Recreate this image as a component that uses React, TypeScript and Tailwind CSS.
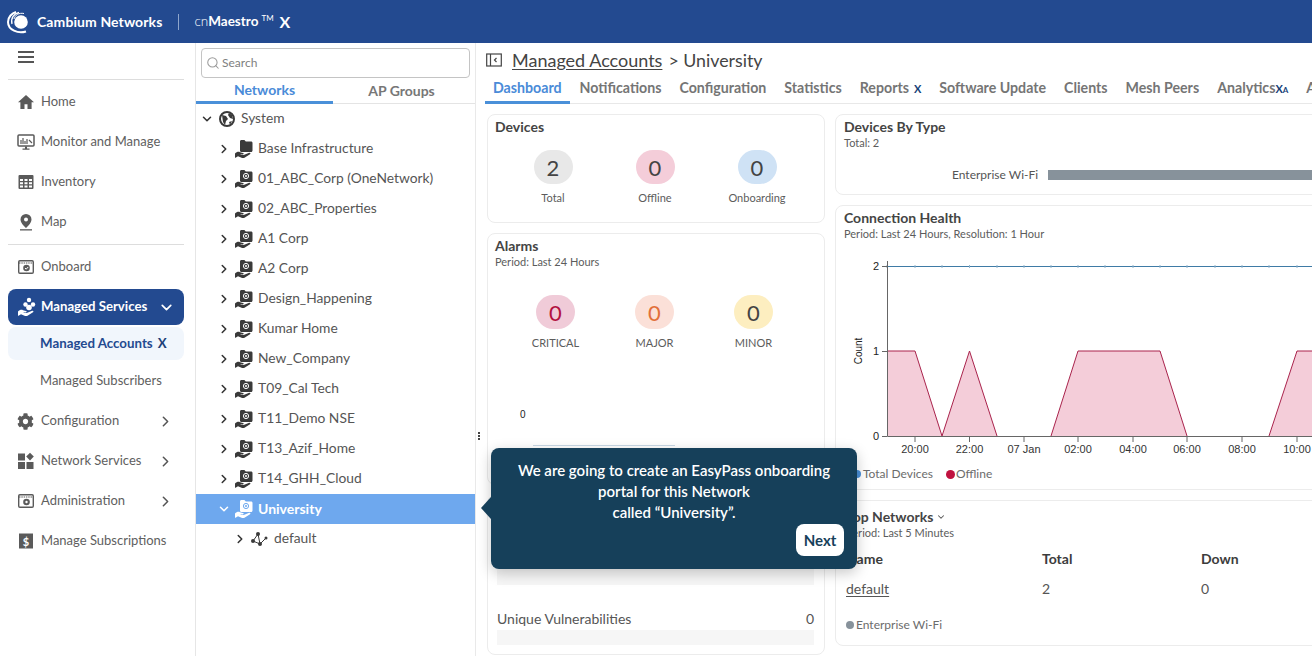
// Dashboard screen: nav rail, network tree, dashboard cards and onboarding tip
import type { ReactNode } from 'react'
import { ChevronDown, ChevronRight, Search } from 'lucide-react'
import { FaCog } from 'react-icons/fa'

const FONT = 'font-["Lato","Noto_Sans",sans-serif]'

function HandFolder({ at = true, light = false }: { at?: boolean; light?: boolean }) {
  const c = light ? '#ffffff' : '#3a3a3a'
  const inner = light ? '#6ea8ee' : '#ffffff'
  return (
    <svg width="20" height="20" viewBox="0 0 20 20" className="shrink-0">
      <path d="M6 2.5c0-.8.6-1.5 1.4-1.5h3l1.4 1.6h5.3c.8 0 1.4.6 1.4 1.4v7.5c0 .8-.6 1.5-1.4 1.5H7.4c-.8 0-1.4-.7-1.4-1.5z" fill={c} />
      {at && <circle cx="12" cy="7" r="2.6" fill="none" stroke={inner} strokeWidth="1" />}
      {at && <circle cx="12" cy="7" r="1" fill={inner} />}
      <path d="M1 14.5c1.5-1.6 3.5-2 5-1.3l3 .8c1 .3.9 1.5-.2 1.5H6.5l.2.5h3l5.5-2.2c1.2-.3 1.7.9.8 1.5l-5.5 3.4c-.8.4-1.5.5-2.4.2L4 17.3l-2.5 1.5H1z" fill={c} />
    </svg>
  )
}

function HomeIcon() {
  return (
    <svg width="18" height="18" viewBox="0 0 18 18" fill="#5a5a5a">
      <path d="M9 2L1 9.2h2.4V16h4.1v-4.8h3V16h4.1V9.2H17z" />
    </svg>
  )
}

function MonitorIcon() {
  return (
    <svg width="18" height="18" viewBox="0 0 18 18">
      <rect x="1" y="2" width="16" height="11" rx="1" fill="none" stroke="#5a5a5a" strokeWidth="1.5" />
      <path d="M4 11V7M6 11V5M8 11V8M10 11V6M12 7l3 3" stroke="#5a5a5a" strokeWidth="1.2" fill="none" />
      <path d="M8 13.5h2v2h2.5v1.2h-7v-1.2H8z" fill="#5a5a5a" />
    </svg>
  )
}

function TableIcon() {
  return (
    <svg width="18" height="18" viewBox="0 0 18 18">
      <rect x="1.5" y="2" width="15" height="14" rx="1" fill="#5a5a5a" />
      <path d="M3 6h3v2H3zM7.5 6h3v2h-3zM12 6h3v2h-3zM3 9.2h3v2H3zM7.5 9.2h3v2h-3zM12 9.2h3v2h-3zM3 12.4h3v2H3zM7.5 12.4h3v2h-3zM12 12.4h3v2h-3z" fill="#fff" />
    </svg>
  )
}

function PinIcon() {
  return (
    <svg width="18" height="18" viewBox="0 0 18 18">
      <path d="M9 1a5.5 5.5 0 0 0-5.5 5.5C3.5 10.5 9 15 9 15s5.500-4.500 5.500-8.500A5.500 5.500 0 0 0 9 1zm0 7.500a2 2 0 1 1 0-4 2 2 0 0 1 0 4z" fill="#5a5a5a" />
      <rect x="3" y="16.2" width="12" height="1.3" fill="#5a5a5a" />
    </svg>
  )
}

function WindowIcon({ gear = false }: { gear?: boolean }) {
  return (
    <svg width="18" height="18" viewBox="0 0 18 18">
      <rect x="1.7" y="2.7" width="14.6" height="12.6" rx="1.2" fill="none" stroke="#5a5a5a" strokeWidth="1.4" />
      <path d="M2 5h14" stroke="#5a5a5a" strokeWidth="1.2" strokeDasharray="1.5 .8" />
      <circle cx="9.5" cy="10" r="3.3" fill="#5a5a5a" />
      {gear ? <circle cx="9.5" cy="10" r="1.2" fill="#fff" /> : <path d="M8 10l1.2 1.2L11.2 9" stroke="#fff" strokeWidth="1" fill="none" />}
    </svg>
  )
}

function PeopleHand() {
  return (
    <svg width="20" height="20" viewBox="0 0 20 20">
      <circle cx="12" cy="3" r="2.2" fill="#fff" />
      <circle cx="8.5" cy="7.5" r="2.2" fill="#fff" />
      <circle cx="16" cy="7.5" r="2.2" fill="#fff" />
      <circle cx="12" cy="10.5" r="2.8" fill="#fff" />
      <path d="M1 14.5c1.5-1.6 3.5-2 5-1.3l3 .8c1 .3.9 1.5-.2 1.5H6.5l.2.5h3l5.5-2.2c1.2-.3 1.7.9.8 1.5l-5.5 3.4c-.8.4-1.5.5-2.4.2L4 17.3l-2.5 1.5H1z" fill="#fff" />
    </svg>
  )
}

function TilesIcon() {
  return (
    <svg width="18" height="18" viewBox="0 0 18 18" fill="#5a5a5a">
      <rect x="1" y="1.5" width="7" height="7" />
      <rect x="1" y="10" width="7" height="7" />
      <rect x="9.5" y="10" width="7" height="7" />
      <path d="M13 .8l3.8 3.8L13 8.4 9.2 4.6z" />
    </svg>
  )
}

function SubsIcon() {
  return (
    <svg width="18" height="18" viewBox="0 0 18 18">
      <path d="M2 1.5h14v15H2z" fill="#5a5a5a" />
      <text x="9" y="13.5" textAnchor="middle" fontSize="11" fontWeight="700" fill="#fff" fontFamily="Lato, sans-serif">$</text>
    </svg>
  )
}

function Logo() {
  return (
    <svg width="24" height="24" viewBox="0 0 24 24" className="shrink-0">
      <circle cx="15" cy="12" r="6.8" fill="#fff" />
      <path d="M20 21.5C12 24 2 20 2 12 2 7 6 3 10 2" stroke="#fff" strokeWidth="2" fill="none" />
      <path d="M6 14C4.5 8 8 3.5 13 2.5" stroke="#fff" strokeWidth="1.3" fill="none" />
      <path d="M8 9c1-4 5-6.5 10-5.5" stroke="#fff" strokeWidth="1" fill="none" />
    </svg>
  )
}

function NavItem({ icon, label, arrow, className = '' }: { icon: ReactNode; label: string; arrow?: boolean; className?: string }) {
  return (
    <div className={'flex h-10 items-center pl-[17px] pr-[21px] ' + className}>
      <span className="flex w-6 items-center">{icon}</span>
      <span className="text-[13px] text-[#606060]">{label}</span>
      {arrow && <ChevronRight className="ml-auto h-[17px] w-[17px] text-[#555555]" strokeWidth={2.2} />}
    </div>
  )
}

const accounts = [
  '01_ABC_Corp (OneNetwork)', '02_ABC_Properties', 'A1 Corp', 'A2 Corp', 'Design_Happening', 'Kumar Home',
  'New_Company', 'T09_Cal Tech', 'T11_Demo NSE', 'T13_Azif_Home', 'T14_GHH_Cloud',
]

function TreeRow({ label, at = true }: { label: string; at?: boolean }) {
  return (
    <div className="flex h-[30px] items-center pl-[21px]">
      <ChevronRight className="h-[14px] w-[14px] text-[#333333]" strokeWidth={2.6} />
      <span className="ml-[3px] mr-[4px]"><HandFolder at={at} /></span>
      <span className="pb-[1px] text-[13.8px] text-[#555555]">{label}</span>
    </div>
  )
}

function Stat({ value, label, bg, fg = 'text-[#444444]', w }: { value: string; label: string; bg: string; fg?: string; w: string }) {
  return (
    <div className={'flex flex-col items-center ' + w}>
      <div className={'flex h-[34px] w-[39px] items-center justify-center rounded-full text-[22px] ' + bg + ' ' + fg}>{value}</div>
      <div className="mt-[7px] text-[11px] leading-[14px] text-[#5c5c5c]">{label}</div>
    </div>
  )
}

function CardTitle({ children, className = '' }: { children: ReactNode; className?: string }) {
  return <div className={'text-[14px] font-bold leading-[18px] text-[#444444] ' + className}>{children}</div>
}

function CardSub({ children, className = '' }: { children: ReactNode; className?: string }) {
  return <div className={'text-[11px] leading-[14px] text-[#5c5c5c] ' + className}>{children}</div>
}

const tabs = ['Notifications', 'Configuration', 'Statistics']

function ConnectionChart() {
  const labels = ['20:00', '22:00', '07 Jan', '02:00', '04:00', '06:00', '08:00', '10:00']
  const px = [79, 133.5, 188, 242, 297, 351, 406, 461]
  const points = [51, 79, 106, 133.5, 161, 188, 215, 242, 269, 297, 324, 351, 379, 406, 433, 461]
  return (
    <svg width="477" height="204" viewBox="0 0 477 204" className="block" fontFamily="'Liberation Sans', Arial, sans-serif">
      <path d="M51 99H79L106 184L133.5 99L161 184H215L242 99H324L351 184H433L461 99H477V184H51Z" fill="#f4cdd9" />
      <path d="M51 99H79L106 184L133.5 99L161 184M215 184L242 99H324L351 184M433 184L461 99H477" fill="none" stroke="#a9234c" strokeWidth="1" />
      <path d="M51 14.5H477" stroke="#3f7ba6" strokeWidth="1" />
      {points.map((p) => <path key={p} d={'M' + p + ' 13v3'} stroke="#8fb2cb" strokeWidth="1" />)}
      <path d="M51.5 9V184.5H477M46 14.5H51M46 99.5H51M46 184.5H51" fill="none" stroke="#666666" strokeWidth="1" />
      {px.map((p) => <path key={p} d={'M' + p + ' 184v6'} stroke="#666666" />)}
      {labels.map((l, i) => <text key={l} x={px[i]} y={201} textAnchor="middle" fontSize="11" fill="#333333">{l}</text>)}
      <text x="43" y="18" textAnchor="end" fontSize="11" fill="#222222">2</text>
      <text x="43" y="103" textAnchor="end" fontSize="11" fill="#222222">1</text>
      <text x="43" y="188" textAnchor="end" fontSize="11" fill="#222222">0</text>
      <text transform="translate(26 99) rotate(-90)" textAnchor="middle" fontSize="10" fill="#222222">Count</text>
    </svg>
  )
}

export default function App() {
  return (
    <div className={'h-[656px] w-[1312px] overflow-hidden bg-white ' + FONT}>
      <header className="flex h-[43px] items-center bg-[#234a90] pl-[6px] text-white">
        <Logo />
        <span className="ml-[7px] text-[14px] font-bold tracking-[0.1px]">Cambium Networks</span>
        <span className="ml-[16px] h-[16px] w-px bg-[#8fa6cc]" />
        <span className="ml-[15px] text-[13.5px] font-light">cn</span>
        <span className="text-[13.5px] font-bold">Maestro</span>
        <span className="mb-[8px] ml-[3px] text-[8px]">TM</span>
        <span className="ml-[6px] text-[16px] font-bold">X</span>
      </header>

      <div className="flex h-[613px]">
        <aside className="w-[196px] shrink-0 border-r border-[#e6e6e6]">
          <div className="ml-2 mr-[11px] flex h-[37px] items-start border-b border-[#dddddd] pl-[10px] pt-[8px]">
            <span className="flex w-4 flex-col gap-[3px]">
              <span className="h-[2px] bg-[#555555]" />
              <span className="h-[2px] bg-[#555555]" />
              <span className="h-[2px] bg-[#555555]" />
            </span>
          </div>
          <NavItem icon={<HomeIcon />} label="Home" className="mt-[2px]" />
          <NavItem icon={<MonitorIcon />} label="Monitor and Manage" />
          <NavItem icon={<TableIcon />} label="Inventory" />
          <NavItem icon={<PinIcon />} label="Map" />
          <div className="ml-2 mr-[11px] mt-[2px] border-b border-[#dddddd]" />
          <NavItem icon={<WindowIcon />} label="Onboard" className="mt-[2px]" />
          <div className="ml-2 mr-[11px] mt-[2px] flex h-9 items-center rounded-lg bg-[#234a90] pl-[9px] pr-[9px] text-white">
            <span className="flex w-6 items-center"><PeopleHand /></span>
            <span className="text-[13.2px] font-bold">Managed Services</span>
            <ChevronDown className="ml-auto h-[17px] w-[17px]" strokeWidth={2.4} />
          </div>
          <div className="ml-2 mr-[11px] mt-[2px] flex h-[33px] items-center rounded-lg bg-[#f1f6fc] pl-[32px] text-[13.3px] font-bold text-[#234a90]">
            Managed Accounts
            <span className="ml-[5px] text-[#1d3f78]">X</span>
          </div>
          <div className="mt-[1px] flex h-10 items-center pl-[40px] text-[13px] text-[#606060]">Managed Subscribers</div>
          <NavItem icon={<FaCog className="h-[17px] w-[17px] text-[#5a5a5a]" />} label="Configuration" arrow />
          <NavItem icon={<TilesIcon />} label="Network Services" arrow />
          <NavItem icon={<WindowIcon gear />} label="Administration" arrow />
          <NavItem icon={<SubsIcon />} label="Manage Subscriptions" />
        </aside>

        <section className="w-[280px] shrink-0 border-r border-[#e9e9e9]">
          <div className="ml-[5px] mt-[5px] flex h-[30px] w-[269px] items-center rounded border border-[#c4c4c4] pl-[4px]">
            <Search className="h-[14px] w-[14px] text-[#9a9a9a]" strokeWidth={1.8} />
            <span className="ml-[2px] text-[12px] text-[#808080]">Search</span>
          </div>
          <div className="flex h-[26px] border-b border-[#e4e4e4]">
            <div className="-mb-px flex w-[137px] items-center justify-center border-b-[3px] border-[#4a90d9] text-[14px] font-bold text-[#4a8bd8]">Networks</div>
            <div className="flex w-[137px] items-center justify-center text-[14px] font-bold text-[#777777]">AP Groups</div>
          </div>
          <div>
            <div className="flex h-[30px] items-center pl-[4px]">
              <ChevronDown className="h-[14px] w-[14px] text-[#333333]" strokeWidth={2.6} />
              <svg width="18" height="18" viewBox="0 0 18 18" className="ml-[4px] mr-[5px]">
                <circle cx="9" cy="9" r="7" fill="none" stroke="#3a3a3a" strokeWidth="2" />
                <path d="M4 5l4 1 2 3-2 2-1 4-2-3zM11 3l3 2 1 4-3-1-2-3zM11 12l3-1-2 4z" fill="#3a3a3a" />
              </svg>
              <span className="pb-[1px] text-[13.8px] text-[#555555]">System</span>
            </div>
            <TreeRow label="Base Infrastructure" at={false} />
            {accounts.map((a) => <TreeRow key={a} label={a} />)}
            <div className="flex h-[30px] items-center bg-[#6ea8ee] pl-[21px] text-white">
              <ChevronDown className="h-[14px] w-[14px]" strokeWidth={2.6} />
              <span className="ml-[3px] mr-[4px]"><HandFolder light /></span>
              <span className="pb-[1px] text-[14px] font-bold">University</span>
            </div>
            <div className="flex h-[30px] items-center pl-[37px]">
              <ChevronRight className="h-[14px] w-[14px] text-[#333333]" strokeWidth={2.6} />
              <svg width="18" height="18" viewBox="0 0 18 18" className="ml-[3px] mr-[6px]">
                <circle cx="8" cy="4" r="2" fill="#3a3a3a" />
                <circle cx="3" cy="11" r="2" fill="#3a3a3a" />
                <circle cx="10" cy="14" r="2" fill="#3a3a3a" />
                <circle cx="16" cy="8" r="1.5" fill="#3a3a3a" />
                <path d="M8 4L3 11L10 14L8 4M10 14L16 8" stroke="#3a3a3a" strokeWidth="1" fill="none" />
              </svg>
              <span className="pb-[1px] text-[13.8px] text-[#555555]">default</span>
            </div>
          </div>
        </section>

        <main className="relative min-w-0 flex-1 overflow-hidden">
          <div className="flex h-[35px] items-center pb-[1px] pl-[10px]">
            <svg width="16" height="14" viewBox="0 0 16 14" className="mr-[10px]">
              <rect x=".7" y="1" width="14.6" height="12" fill="none" stroke="#444444" strokeWidth="1.2" />
              <path d="M4.5 1v12" stroke="#444444" strokeWidth="1.2" />
              <path d="M10.5 5L8.5 7l2 2" stroke="#444444" strokeWidth="1.2" fill="none" />
            </svg>
            <span className="text-[18px] text-[#444444] underline underline-offset-2">Managed Accounts</span>
            <span className="ml-[6px] text-[17.8px] text-[#444444]">{'>'} University</span>
          </div>
          <div className="ml-[9px] flex h-[26px] w-[1000px] gap-[18px] whitespace-nowrap border-b border-[#e8e8e8] text-[14.2px] font-bold leading-[20px] text-[#757575]">
            <div className="-mb-px -mr-[8px] border-b-[3px] border-[#4a90d9] px-2 text-[#4a8bd8]">Dashboard</div>
            {tabs.map((t) => <div key={t}>{t}</div>)}
            <div>Reports<span className="ml-[5px] text-[11px] text-[#173f78]">X</span></div>
            <div>Software Update</div>
            <div>Clients</div>
            <div>Mesh Peers</div>
            <div>Analytics<span className="text-[11px] text-[#173f78]">X</span><span className="text-[8px] text-[#173f78]">A</span></div>
            <div>A</div>
          </div>

          <div className="flex gap-[10px] pl-[11px] pt-[10px]">
            <div className="flex w-[338px] shrink-0 flex-col gap-[10px]">
              <div className="h-[109px] rounded-lg border border-[#ececec] px-[7px] pt-[3px]">
                <CardTitle>Devices</CardTitle>
                <div className="mt-[14px] flex pl-[7px]">
                  <Stat value="2" label="Total" bg="bg-[#e8e8e8]" w="w-[102px]" />
                  <Stat value="0" label="Offline" bg="bg-[#f4cdd9]" w="w-[102px]" />
                  <Stat value="0" label="Onboarding" bg="bg-[#cfe2f5]" w="w-[102px]" />
                </div>
              </div>
              <div className="h-[252px] rounded-lg border border-[#ececec] px-[7px] pt-[3px]">
                <CardTitle>Alarms</CardTitle>
                <CardSub>Period: Last 24 Hours</CardSub>
                <div className="mt-[26px] flex pl-[11px]">
                  <Stat value="0" label="CRITICAL" bg="bg-[#f0cbd8]" fg="text-[#b3123f]" w="w-[99px]" />
                  <Stat value="0" label="MAJOR" bg="bg-[#fbe0d8]" fg="text-[#e2703a]" w="w-[99px]" />
                  <Stat value="0" label="MINOR" bg="bg-[#fdeec0]" fg="text-[#444444]" w="w-[99px]" />
                </div>
                <div className="ml-[25px] mt-[58px] font-['Liberation_Sans',sans-serif] text-[10px] leading-[14px] text-[#222222]">0</div>
                <div className="ml-[38px] mt-[23px] w-[142px] border-b border-[#c9d8e6]" />
              </div>
              <div className="h-[160px] rounded-lg border border-[#ececec] pl-[9px] pr-[10px]">
                <div className="mt-[69px] h-[20px] bg-[#f6f6f6]" />
                <div className="mt-[24px] flex justify-between text-[14px] leading-[20px] text-[#555555]">
                  <span>Unique Vulnerabilities</span>
                  <span>0</span>
                </div>
                <div className="mt-[1px] h-[15px] bg-[#f6f6f6]" />
              </div>
            </div>

            <div className="flex w-[600px] shrink-0 flex-col gap-[10px]">
              <div className="h-[81px] rounded-lg border border-[#ececec] pl-[8px] pt-[3px]">
                <CardTitle>Devices By Type</CardTitle>
                <CardSub>Total: 2</CardSub>
                <div className="mt-[15px] flex items-center">
                  <span className="ml-[108px] w-[96px] shrink-0 whitespace-nowrap text-[12px] leading-[20px] text-[#555555]">Enterprise Wi-Fi</span>
                  <span className="h-[10px] w-[400px] bg-[#87929b]" />
                </div>
              </div>
              <div className="h-[285px] rounded-lg border border-[#ececec] pt-[3px]">
                <CardTitle className="pl-[8px]">Connection Health</CardTitle>
                <CardSub className="pl-[8px]">Period: Last 24 Hours, Resolution: 1 Hour</CardSub>
                <div className="mt-[11px]"><ConnectionChart /></div>
                <div className="ml-[17px] mt-[10px] flex items-center text-[12px] leading-[16px] text-[#6c6c6c]">
                  <span className="h-2 w-2 rounded-full bg-[#4a90d9]" />
                  <span className="ml-[2px]">Total Devices</span>
                  <span className="ml-[13px] h-[9px] w-[9px] rounded-full bg-[#c0123f]" />
                  <span className="ml-[1px]">Offline</span>
                </div>
              </div>
              <div className="h-[146px] rounded-lg border border-[#ececec] pl-[10px] pt-[7px]">
                <CardTitle className="flex items-center">
                  Top Networks
                  <ChevronDown className="ml-[3px] h-[10px] w-[10px] text-[#555555]" strokeWidth={2.5} />
                </CardTitle>
                <CardSub>Period: Last 5 Minutes</CardSub>
                <div className="mt-[9px] flex text-[14px] font-bold leading-[20px] text-[#3c3c3c]">
                  <span className="w-[196px]">Name</span>
                  <span className="w-[159px]">Total</span>
                  <span>Down</span>
                </div>
                <div className="mt-[10px] flex text-[14px] leading-[20px] text-[#555555]">
                  <span className="w-[196px] underline underline-offset-2">default</span>
                  <span className="w-[159px]">2</span>
                  <span>0</span>
                </div>
                <div className="mt-[18px] flex items-center text-[12px] leading-[16px] text-[#6c6c6c]">
                  <span className="mr-[2px] h-2 w-2 rounded-full bg-[#87929b]" />
                  Enterprise Wi-Fi
                </div>
              </div>
            </div>
          </div>

          <div className="absolute left-[2px] top-[389px] flex flex-col gap-px">
            <span className="h-[2px] w-[2px] bg-[#444444]" />
            <span className="h-[2px] w-[2px] bg-[#444444]" />
            <span className="h-[2px] w-[2px] bg-[#444444]" />
          </div>

          <div className="absolute left-[15px] top-[405px] h-[121px] w-[366px] rounded-lg bg-[#16405a] px-[20px] pt-[12px] text-center text-[15px] font-semibold leading-[21px] text-white shadow-[0_4px_14px_rgba(0,0,0,0.22)]">
            <span className="absolute -left-[10px] top-[49px] h-0 w-0 border-y-[11px] border-r-[10px] border-y-transparent border-r-[#16405a]" />
            <p>We are going to create an EasyPass onboarding</p>
            <p>portal for this Network</p>
            <p>called “University”.</p>
            <button className="absolute bottom-[13px] right-[13px] h-[32px] w-[48px] rounded-lg bg-white text-[15px] font-bold text-[#16405a]">Next</button>
          </div>
        </main>
      </div>
    </div>
  )
}
